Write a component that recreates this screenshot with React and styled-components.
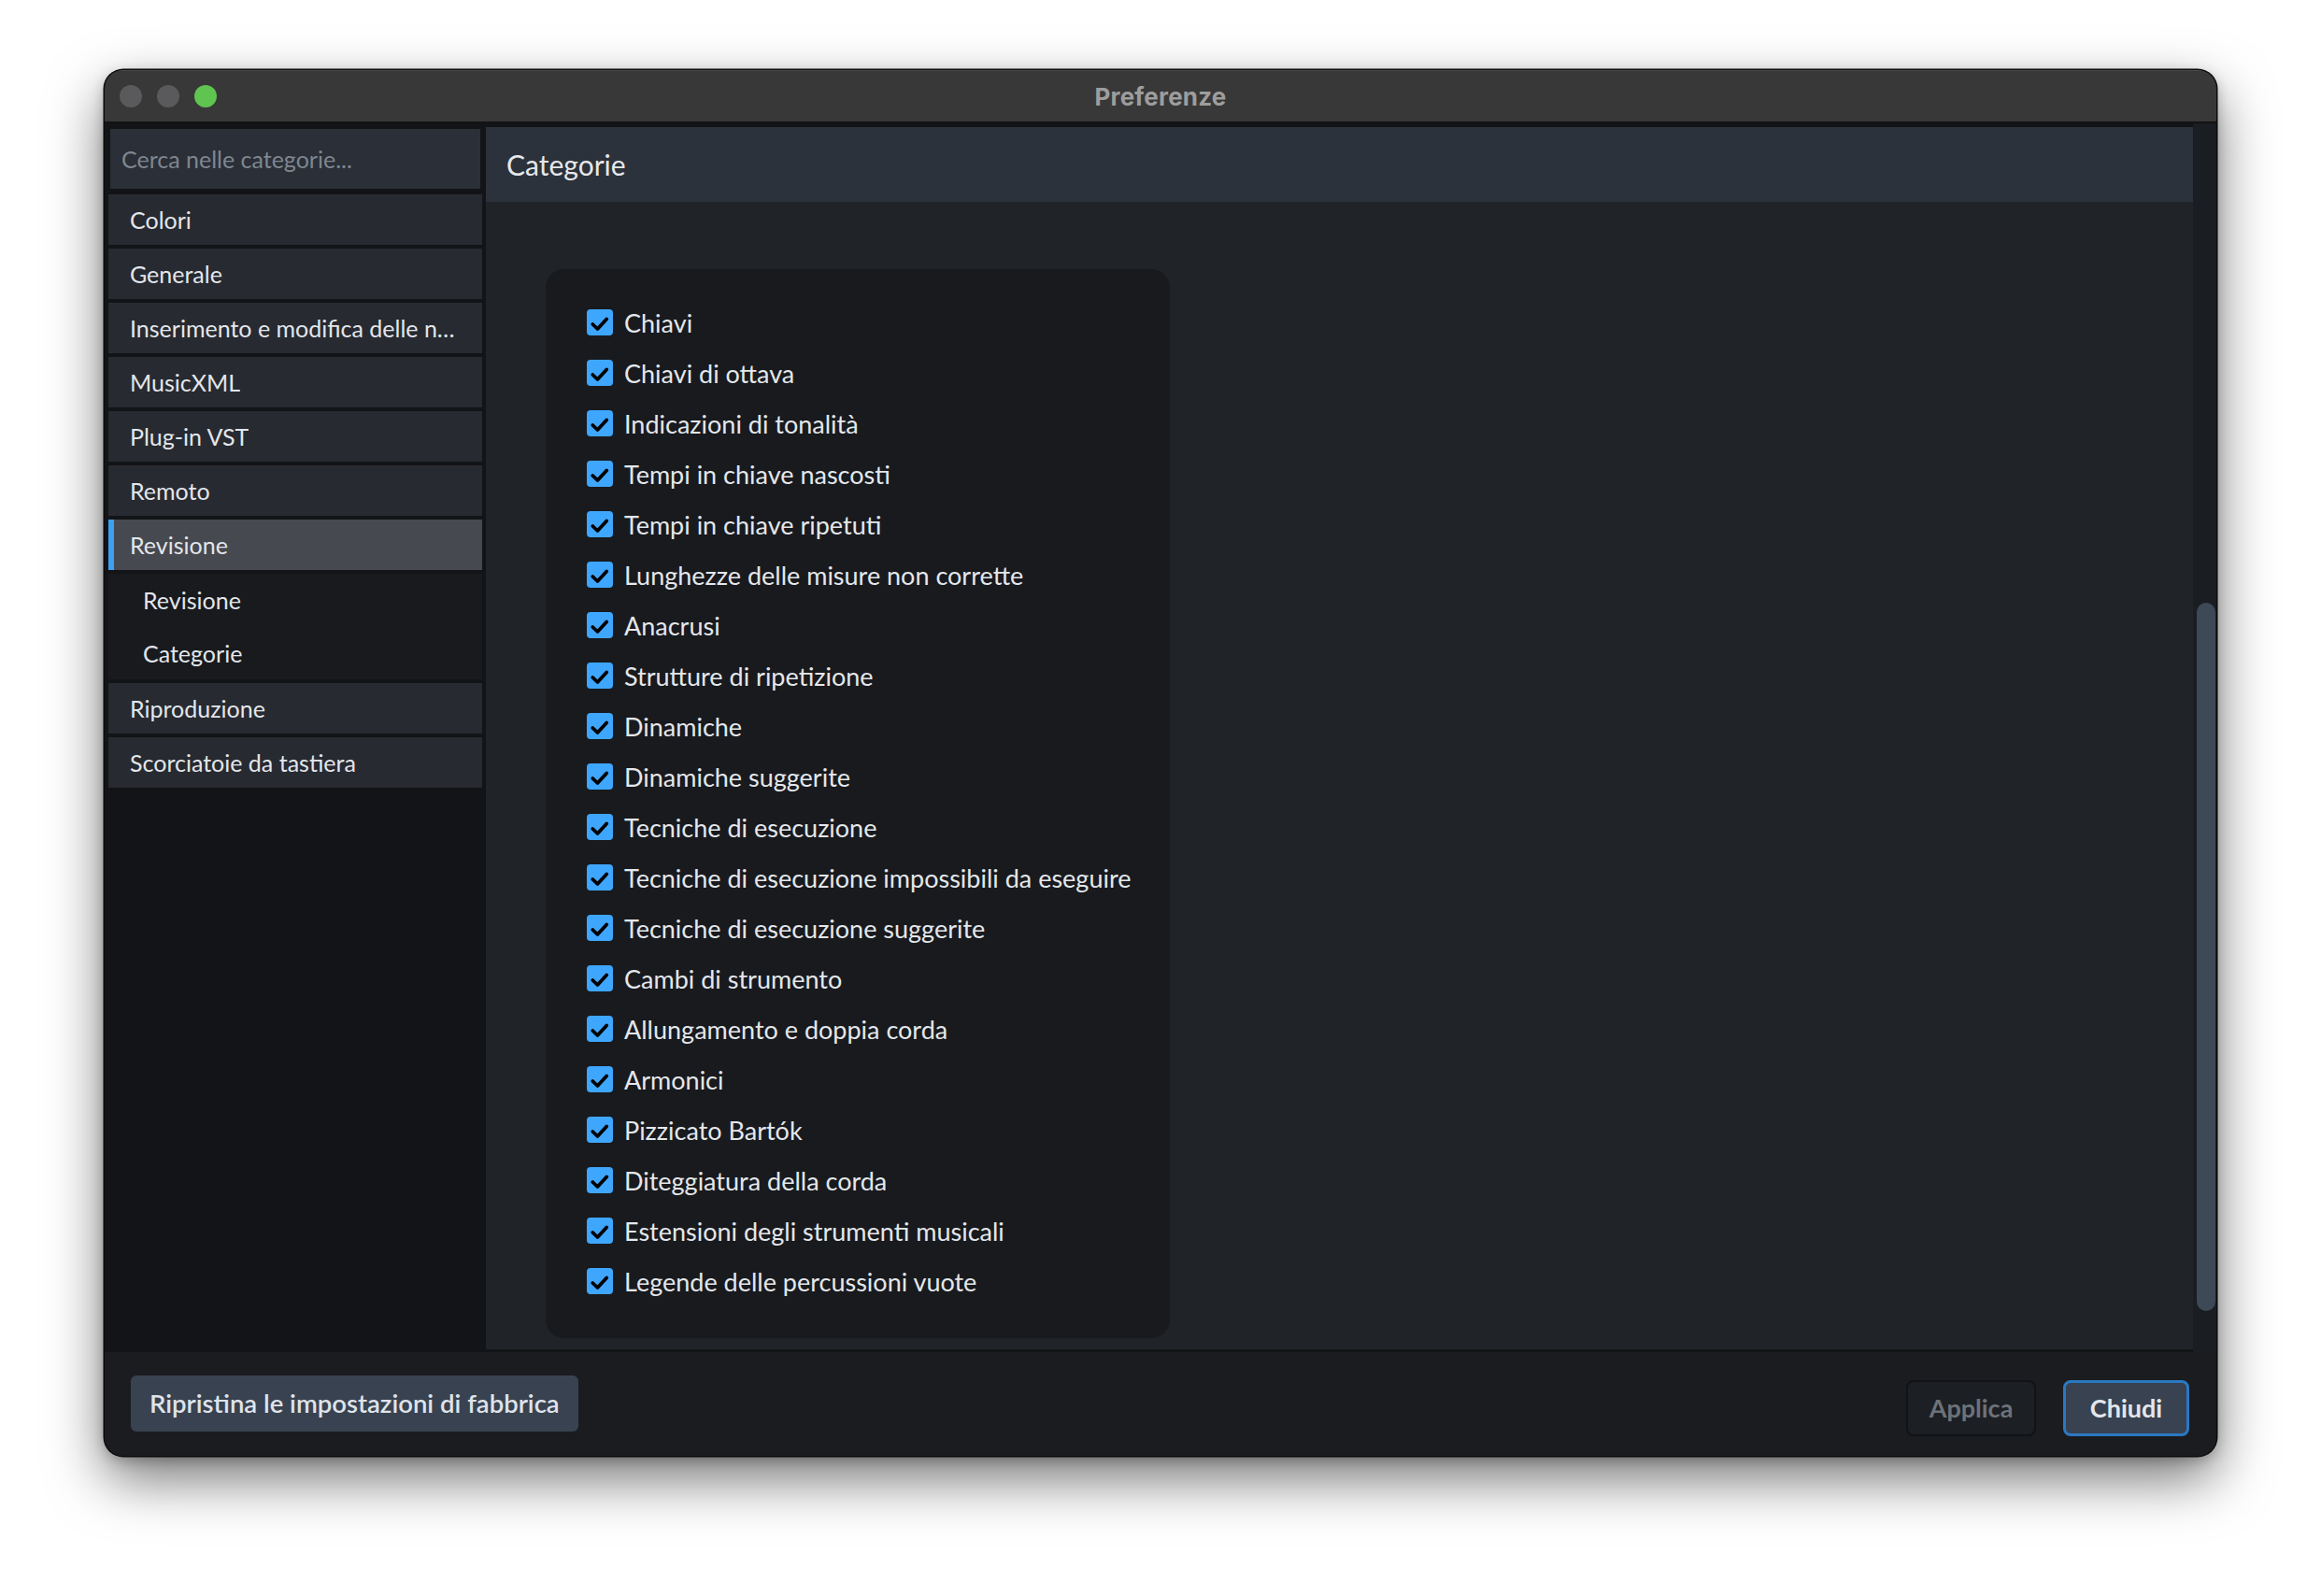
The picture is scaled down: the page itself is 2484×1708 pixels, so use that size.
import React from "react";
import styled, { createGlobalStyle } from "styled-components";

const GlobalStyle = createGlobalStyle`
  html, body {
    margin: 0;
    padding: 0;
    background: #ffffff;
  }
  body {
    font-family: Lato, "Noto Sans", sans-serif;
    -webkit-font-smoothing: antialiased;
  }
  * {
    box-sizing: border-box;
  }
`;

const Page = styled.div`
  width: 2484px;
  height: 1708px;
  padding: 75px 112px 0;
  overflow: hidden;
`;

const Window = styled.div`
  width: 2260px;
  height: 1483px;
  border-radius: 20px;
  overflow: hidden;
  display: flex;
  flex-direction: column;
  background: #1a1c20;
  box-shadow: 0 0 0 1.5px #0b0b0c, 0 24px 60px rgba(0, 0, 0, 0.55),
    0 4px 14px rgba(0, 0, 0, 0.25);
`;

const TitleBar = styled.div`
  height: 57px;
  flex: none;
  display: grid;
  grid-template-columns: 1fr auto 1fr;
  align-items: center;
  background: #383838;
  border-top: 1px solid #4a4a4a;
  border-bottom: 2px solid #121212;
`;

const Lights = styled.div`
  display: flex;
  gap: 16px;
  padding-left: 16px;
`;

const Light = styled.span`
  width: 24px;
  height: 24px;
  border-radius: 50%;
  background: ${(p) => p.color};
`;

const Title = styled.div`
  font-family: Inter, "Liberation Sans", sans-serif;
  font-weight: 700;
  font-size: 26px;
  color: #9d9d9d;
  letter-spacing: 0.2px;
`;

const Body = styled.div`
  flex: 1;
  display: flex;
  background: #131417;
  padding: 4px 0 3px 4px;
  min-height: 0;
`;

const Sidebar = styled.div`
  width: 400px;
  flex: none;
  display: flex;
  flex-direction: column;
  gap: 4px;
`;

const Search = styled.div`
  height: 64px;
  margin: 2px 2px 2px;
  padding-left: 12px;
  display: flex;
  align-items: center;
  background: #2a2f38;
  color: #80868e;
  font-size: 25px;
`;

const NavItem = styled.div`
  position: relative;
  height: 54px;
  display: flex;
  align-items: center;
  padding: 0 8px 0 23px;
  background: ${(p) => (p.active ? "#464a50" : "#272a31")};
  color: #e3e6eb;
  font-size: 25px;
  white-space: nowrap;
  overflow: hidden;

  span {
    overflow: hidden;
    text-overflow: ellipsis;
  }

  &::before {
    content: "";
    display: ${(p) => (p.active ? "block" : "none")};
    position: absolute;
    left: 0;
    top: 0;
    bottom: 0;
    width: 6px;
    background: #3ba1f0;
  }
`;

const SubGroup = styled.div`
  height: 113px;
  display: flex;
  flex-direction: column;
  justify-content: center;
  background: #181a1e;
`;

const SubItem = styled.div`
  height: 57px;
  display: flex;
  align-items: center;
  padding-left: 37px;
  color: #e3e6eb;
  font-size: 25px;
`;

const Main = styled.div`
  width: 1827px;
  flex: none;
  margin-left: 4px;
  display: flex;
  flex-direction: column;
  background: #202327;
`;

const Header = styled.div`
  height: 80px;
  flex: none;
  display: flex;
  align-items: center;
  padding-left: 22px;
  background: #2c323b;
  color: #e6e8ec;
  font-size: 30px;
`;

const Content = styled.div`
  flex: 1;
  padding: 72px 0 0 64px;
  overflow: hidden;
`;

const Card = styled.div`
  width: fit-content;
  min-width: 666px;
  padding: 30px 42px 34px 44px;
  border-radius: 20px;
  background: #181a1e;
`;

const Row = styled.label`
  height: 54px;
  display: flex;
  align-items: center;
  gap: 12px;
  color: #e4e7eb;
  font-size: 27px;
  white-space: nowrap;
`;

const Box = styled.span`
  width: 28px;
  height: 28px;
  flex: none;
  border-radius: 4px;
  background: #3ea6fd;
  display: flex;
`;

const ScrollTrack = styled.div`
  width: 25px;
  flex: none;
  margin-top: -4px;
  margin-bottom: -3px;
  padding: 513px 1px 44px 4px;
  display: flex;
  flex-direction: column;
  background: #1a1d21;
`;

const Thumb = styled.div`
  height: 758px;
  border-radius: 10px;
  background: #3e4957;
`;

const Footer = styled.div`
  height: 111px;
  flex: none;
  display: flex;
  align-items: center;
  justify-content: space-between;
  padding: 0 29px 0 28px;
  background: #1a1c20;
`;

const ResetButton = styled.div`
  height: 60px;
  padding: 0 20px;
  display: flex;
  align-items: center;
  border-radius: 6px;
  background: #394250;
  color: #dfe3ea;
  font-size: 27.5px;
  font-weight: 600;
  margin-top: -2px;
`;

const Actions = styled.div`
  display: flex;
  gap: 29px;
  margin-top: 8px;
`;

const ActionButton = styled.div`
  width: ${(p) => (p.primary ? "135px" : "139px")};
  height: 60px;
  display: flex;
  align-items: center;
  justify-content: center;
  border-radius: 8px;
  font-size: 27px;
  font-weight: 700;
  background: ${(p) => (p.primary ? "#384250" : "#1c1f23")};
  border: ${(p) => (p.primary ? "3px solid #2b78c2" : "2px solid #111316")};
  color: ${(p) => (p.primary ? "#e2e6ec" : "#6d7279")};
`;

const Check = () => (
  <svg width="28" height="28" viewBox="0 0 28 28">
    <path
      d="M6.3 16 L11.5 21 L21.2 10.5"
      fill="none"
      stroke="#000"
      strokeWidth="3.8"
      strokeLinecap="round"
      strokeLinejoin="round"
    />
  </svg>
);

const navTop = [
  "Colori",
  "Generale",
  "Inserimento e modifica delle n…",
  "MusicXML",
  "Plug-in VST",
  "Remoto",
];

const categories = [
  "Chiavi",
  "Chiavi di ottava",
  "Indicazioni di tonalità",
  "Tempi in chiave nascosti",
  "Tempi in chiave ripetuti",
  "Lunghezze delle misure non corrette",
  "Anacrusi",
  "Strutture di ripetizione",
  "Dinamiche",
  "Dinamiche suggerite",
  "Tecniche di esecuzione",
  "Tecniche di esecuzione impossibili da eseguire",
  "Tecniche di esecuzione suggerite",
  "Cambi di strumento",
  "Allungamento e doppia corda",
  "Armonici",
  "Pizzicato Bartók",
  "Diteggiatura della corda",
  "Estensioni degli strumenti musicali",
  "Legende delle percussioni vuote",
];

export default function App() {
  return (
    <>
      <GlobalStyle />
      <Page>
        <Window>
          <TitleBar>
            <Lights>
              <Light color="#5a5a5c" />
              <Light color="#5a5a5c" />
              <Light color="#5fc450" />
            </Lights>
            <Title>Preferenze</Title>
            <div />
          </TitleBar>

          <Body>
            <Sidebar>
              <Search>Cerca nelle categorie...</Search>
              {navTop.map((item) => (
                <NavItem key={item}>
                  <span>{item}</span>
                </NavItem>
              ))}
              <NavItem active>
                <span>Revisione</span>
              </NavItem>
              <SubGroup>
                <SubItem>Revisione</SubItem>
                <SubItem>Categorie</SubItem>
              </SubGroup>
              <NavItem>
                <span>Riproduzione</span>
              </NavItem>
              <NavItem>
                <span>Scorciatoie da tastiera</span>
              </NavItem>
            </Sidebar>

            <Main>
              <Header>Categorie</Header>
              <Content>
                <Card>
                  {categories.map((c) => (
                    <Row key={c}>
                      <Box>
                        <Check />
                      </Box>
                      {c}
                    </Row>
                  ))}
                </Card>
              </Content>
            </Main>

            <ScrollTrack>
              <Thumb />
            </ScrollTrack>
          </Body>

          <Footer>
            <ResetButton>Ripristina le impostazioni di fabbrica</ResetButton>
            <Actions>
              <ActionButton>Applica</ActionButton>
              <ActionButton primary>Chiudi</ActionButton>
            </Actions>
          </Footer>
        </Window>
      </Page>
    </>
  );
}
